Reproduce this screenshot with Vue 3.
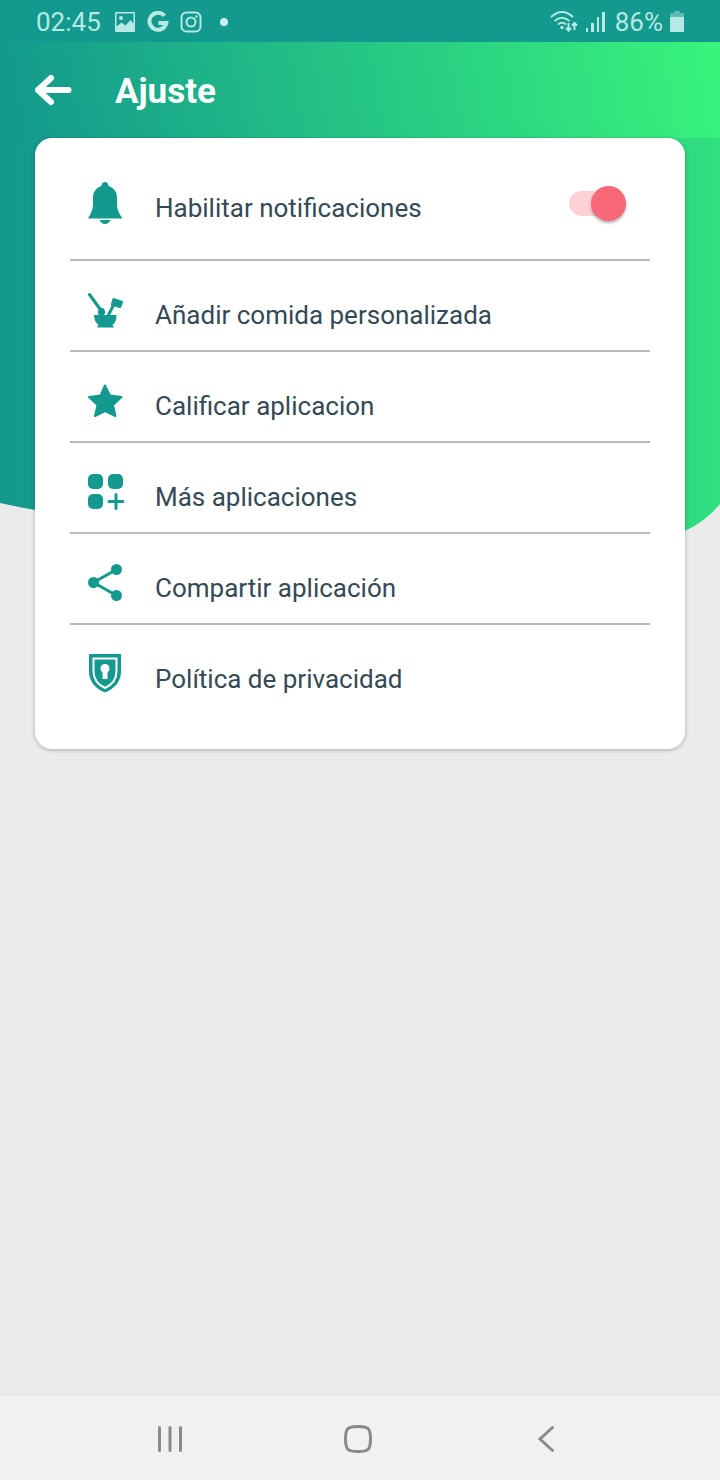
<script setup>
import { ref } from 'vue'

const notifications = ref(true)
const items = [
  { id: 'food', label: 'Añadir comida personalizada' },
  { id: 'rate', label: 'Calificar aplicacion' },
  { id: 'apps', label: 'Más aplicaciones' },
  { id: 'share', label: 'Compartir aplicación' },
  { id: 'privacy', label: 'Política de privacidad' }
]
</script>

<template>
  <div class="screen">
    <div class="status">
      <span class="time">02:45</span>
      <svg class="s-icon" width="22" height="22" viewBox="0 0 22 22">
        <path fill-rule="evenodd" d="M2 1h18q1 0 1 1v18q0 1-1 1H2q-1 0-1-1V2q0-1 1-1zM2.500 2.500V15.500l5-4 4 3 5-5.500 3 3.500V2.500z" />
        <circle cx="7" cy="7" r="2" />
      </svg>
      <svg class="s-icon" width="22" height="22" viewBox="0 0 22 22">
        <path class="thick" d="M17.500 4.800A8.500 8.500 0 1 0 19.300 12H11.500" />
      </svg>
      <svg class="s-icon" width="22" height="22" viewBox="0 0 22 22">
        <rect class="thin" x="1.500" y="1.500" width="19" height="19" rx="5" />
        <circle class="thin" cx="11" cy="11" r="4.500" />
        <circle cx="16.500" cy="5.500" r="1.300" />
      </svg>
      <span class="dot"></span>
      <span class="spacer"></span>
      <svg class="wifi" width="28" height="24" viewBox="0 0 28 24">
        <path class="thin" d="M1 7Q12-3 23 7M4.500 11Q12 4.500 19.500 11M8 14.500Q12 11 16 14.500" />
        <circle cx="12" cy="17.500" r="1.700" />
        <path class="thin" d="M18.500 13v7M16 18l2.500 2.500L21 18M24.500 20v-7M22 15.500l2.500-2.500L27 15.500" />
      </svg>
      <svg class="bars" width="20" height="22" viewBox="0 0 20 22">
        <path d="M0 17h2v4H0zM5 12h3v9H5zM11 6h2v15h-2zM16 1h3v20h-3z" />
      </svg>
      <span class="percent">86%</span>
      <svg class="battery" width="14" height="22" viewBox="0 0 14 22">
        <path opacity=".45" d="M4 0h6v2h4v4H0V2h4z" />
        <path d="M0 6h14v14q0 1-1 1H1q-1 0-1-1z" />
      </svg>
    </div>

    <header class="header">
      <button class="back" aria-label="Atrás">
        <svg width="38" height="34" viewBox="0 0 38 34">
          <path d="M34.500 17H5M17 5L4 17l13 12" />
        </svg>
      </button>
      <h1>Ajuste</h1>
    </header>

    <main class="content">
      <svg class="backdrop" viewBox="0 0 720 440" preserveAspectRatio="none" aria-hidden="true">
        <defs>
          <linearGradient id="wave" x1="0" y1="0" x2="1" y2="0">
            <stop offset="0" stop-color="#13998d" />
            <stop offset=".05" stop-color="#149b8e" />
            <stop offset=".95" stop-color="#2edc80" />
            <stop offset="1" stop-color="#30df80" />
          </linearGradient>
        </defs>
        <path fill="url(#wave)" d="M0 0H720V366Q706 383 685 393C540 455 330 420 35 372Q18 369 0 365Z" />
      </svg>

      <section class="card">
        <div class="row first">
          <svg class="icon" width="36" height="44" viewBox="0 0 36 44">
            <path d="M17 0c2 0 3.500 1.500 3.500 4C26 6 29 10 29 15v8q0 4 2.500 9L34.500 36.500H0L2.500 32Q5 27 5 23v-8C5 10 8 6 13.500 4c0-2.500 1.500-4 3.500-4zM11.500 38h11q-2 4-5.500 4t-5.500-4z" />
          </svg>
          <label class="label" for="notifications">Habilitar notificaciones</label>
          <input id="notifications" v-model="notifications" class="switch" type="checkbox" role="switch" />
        </div>

        <button v-for="item in items" :key="item.id" class="row">
          <svg class="icon" width="36" height="40" viewBox="0 0 36 40">
            <template v-if="item.id === 'food'">
              <path class="utensil" d="M1.500 4.500L12 19M25.500 15L20 26" />
              <ellipse cx="13.500" cy="22" rx="3.500" ry="4" />
              <path d="M25.500 8l9 3q1 .5.500 1.500l-2 5q-.5 1-1.500.500l-8-2.500q-1-.5-.5-1.500l1.500-5q.3-1.200 1-1z" />
              <path d="M6 25h22.500q.3 6.500-4 10l1.500 2.500H9L10.500 35Q6 31.500 6 25z" />
            </template>
            <path v-else-if="item.id === 'rate'" class="star" d="M17 4.500l5 10 11.500 1.500-8.500 8L27.500 35 17 30 7 35l2.500-11L1 16l11.500-1.500z" />
            <template v-else-if="item.id === 'apps'">
              <rect x="0" y="2" width="15" height="15" rx="5" />
              <rect x="20" y="2" width="15" height="15" rx="5" />
              <rect x="0" y="22" width="15" height="15" rx="5" />
              <path class="line" d="M28 22.500v14M21 29.500h14" />
            </template>
            <template v-else-if="item.id === 'share'">
              <path class="line" d="M28.500 6.500L5.500 19.500l23 13" />
              <circle cx="28.500" cy="6.500" r="5.500" />
              <circle cx="5.500" cy="19.500" r="5.500" />
              <circle cx="28.500" cy="32.500" r="5.500" />
            </template>
            <template v-else>
              <path d="M1 0h32v17q0 15-16 21.500Q1 32 1 17z" />
              <path class="inset" d="M5.500 4.500h23v13q0 11-11.500 16.500Q5.500 28.500 5.500 17.500z" />
              <circle class="hole" cx="17" cy="14.500" r="4.500" />
              <path class="hole" d="M14.500 16h5v9h-5z" />
            </template>
          </svg>
          <span class="label">{{ item.label }}</span>
        </button>
      </section>
    </main>

    <nav class="nav">
      <button aria-label="Recientes">
        <svg width="30" height="30" viewBox="0 0 30 30"><path d="M4.500 3.500v23M15 3.500v23M25.500 3.500v23" /></svg>
      </button>
      <button aria-label="Inicio">
        <svg width="30" height="30" viewBox="0 0 30 30"><path d="M15 2.500c10.500 0 12.500 2 12.500 12.500S25.500 27.500 15 27.500 2.500 25.500 2.500 15 4.500 2.500 15 2.500z" /></svg>
      </button>
      <button aria-label="Volver">
        <svg width="30" height="30" viewBox="0 0 30 30"><path d="M21.500 3.500L9 15l12.500 11.500" /></svg>
      </button>
    </nav>
  </div>
</template>

<style>
body {
  margin: 0;
  background: #ebebeb;
}
</style>

<style scoped>
.screen {
  min-height: 100vh;
  display: flex;
  flex-direction: column;
  background: #ebebeb;
  font-family: Roboto, "Liberation Sans", sans-serif;
}

button {
  border: 0;
  padding: 0;
  background: none;
  font: inherit;
  color: inherit;
  cursor: pointer;
}

svg {
  display: block;
  flex: none;
}

.status {
  height: 42px;
  box-sizing: border-box;
  display: flex;
  align-items: center;
  padding: 2px 36px 0;
  background: #13998d;
  color: #b7e9e4;
  fill: #b7e9e4;
  font-size: 26px;
}

.s-icon {
  margin-left: 11px;
}

.time + .s-icon {
  margin-left: 13px;
}

.thick,
.thin {
  fill: none;
  stroke: #b7e9e4;
  stroke-width: 2;
}

.thick {
  stroke-width: 4;
}

.dot {
  width: 8px;
  height: 8px;
  margin-left: 18px;
  border-radius: 50%;
  background: #c9f3ef;
}

.spacer {
  flex: 1;
}

.bars {
  margin: 0 9px 0 8px;
}

.battery {
  margin-left: 7px;
}

.header {
  height: 96px;
  display: flex;
  align-items: center;
  gap: 43px;
  padding: 0 34px;
  background: linear-gradient(80deg, #13998d 2%, #38f27c 98%);
  color: #fff;
}

.back path {
  fill: none;
  stroke: #fff;
  stroke-width: 6;
  stroke-linecap: round;
  stroke-linejoin: round;
}

h1 {
  margin: 0;
  padding-top: 4px;
  font-size: 35px;
  line-height: 40px;
  font-weight: 700;
}

.content {
  flex: 1;
  position: relative;
  padding: 0 35px;
}

.backdrop {
  position: absolute;
  top: 0;
  left: 0;
  width: 100%;
  height: 440px;
}

.card {
  position: relative;
  padding: 0 35px 33px;
  border-radius: 17px;
  background: #fff;
  box-shadow: 0 1px 4px rgba(0, 0, 0, 0.28);
}

.row {
  width: 100%;
  height: 91px;
  box-sizing: border-box;
  display: flex;
  align-items: center;
  gap: 31px;
  padding: 8px 24px 0 18px;
  border-bottom: 2px solid #bababa;
  color: #344955;
  font-size: 26px;
  line-height: 32px;
  text-align: left;
}

.row:last-child {
  border-bottom-color: transparent;
}

.first {
  height: 123px;
  padding-top: 10px;
}

.icon {
  fill: #13998d;
}

.label {
  flex: 1;
  padding-top: 10px;
}

.first .label {
  padding-top: 8px;
}

.star {
  stroke: #13998d;
  stroke-width: 2;
  stroke-linejoin: round;
}

.line,
.utensil {
  fill: none;
  stroke: #13998d;
  stroke-width: 3;
  stroke-linecap: round;
}

.inset {
  fill: none;
  stroke: #fff;
  stroke-width: 2;
}

.hole {
  fill: #fff;
}

.switch {
  appearance: none;
  position: relative;
  width: 57px;
  height: 36px;
  margin: 0;
  cursor: pointer;
}

.switch::before {
  content: "";
  position: absolute;
  inset: 5px 2px 6px 0;
  border-radius: 13px;
  background: #d0d0d0;
}

.switch::after {
  content: "";
  position: absolute;
  top: 0;
  left: 0;
  width: 35px;
  height: 35px;
  border-radius: 50%;
  background: #f1f1f1;
  box-shadow: 0 2px 3px rgba(0, 0, 0, 0.3);
}

.switch:checked::before {
  background: #fed1d7;
}

.switch:checked::after {
  left: 22px;
  background: #f96878;
}

.nav {
  height: 84px;
  display: flex;
  align-items: center;
  justify-content: space-around;
  padding: 2px 80px 0 76px;
  box-sizing: border-box;
  background: #f1f1f1;
}

.nav path {
  fill: none;
  stroke: #8a8a8a;
  stroke-width: 3;
  stroke-linecap: round;
}
</style>
